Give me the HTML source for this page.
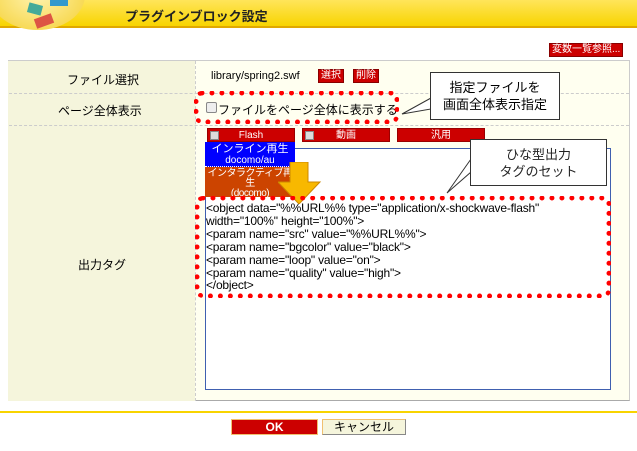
<!DOCTYPE html>
<html><head><meta charset="utf-8"><style>
*{margin:0;padding:0;box-sizing:border-box}
body{width:637px;height:451px;background:#fff;font-family:"Liberation Sans","Noto Sans CJK JP",sans-serif;font-size:12px;color:#000;position:relative;overflow:hidden}
.abs{position:absolute}
.hdr{left:0;top:0;width:637px;height:28px;background:linear-gradient(#ffe55a,#f8d400);border-bottom:2px solid #e0a800}
.logo{left:-10px;top:-40px;width:95px;height:70px;border-radius:50%;background:radial-gradient(#fff3b0,#f4cf30)}
.title{left:125px;top:6px;font-size:13px;font-weight:bold;color:#222}
.rb{background:#c00;color:#fff;font-size:10px;border:1px solid #800;line-height:12px;padding:0 2px}
.tbl{left:8px;top:60px;width:622px;height:341px;border:1px solid #ccc;border-bottom:1px solid #aaa;background:#fffff0}
.lab{left:8px;width:187px;background:#f5f5dc;text-align:center;font-size:12px}
.dash{height:0;border-top:1px dashed #ccc}
.tab{top:128px;height:14px;background:#c00;color:#fff;font-size:10px;text-align:center;line-height:14px;border:1px solid #900}
.tab i{position:absolute;left:2px;top:2px;width:9px;height:9px;background:#ddd;border:1px solid #888}
.ta{left:205px;top:148px;width:406px;height:242px;border:1px solid #4060b0;background:#fff}
.code{left:206px;top:202px;font-size:12px;line-height:12.9px;white-space:pre;letter-spacing:-0.2px}
.dot{border:5px dotted #f00;border-radius:8px}
.call{background:#fff;border:1px solid #333;text-align:center;font-size:13px;line-height:17px}
</style></head><body>
<div class="abs hdr"></div>
<div class="abs logo"></div>
<div class="abs" style="left:28px;top:4px;width:14px;height:10px;background:#4a9;transform:rotate(15deg)"></div>
<div class="abs" style="left:50px;top:0;width:18px;height:6px;background:#39c"></div>
<div class="abs" style="left:35px;top:16px;width:18px;height:10px;background:#d54;transform:rotate(-20deg)"></div>
<div class="abs title">プラグインブロック設定</div>
<div class="abs rb" style="left:549px;top:43px;">変数一覧参照...</div>
<div class="abs tbl"></div>
<div class="abs lab" style="top:61px;height:340px"></div>
<div class="abs dash" style="left:9px;top:93px;width:620px"></div>
<div class="abs dash" style="left:9px;top:125px;width:620px"></div>
<div class="abs" style="left:195px;top:61px;height:340px;border-left:1px dashed #ccc"></div>
<div class="abs" style="left:67px;top:71px">ファイル選択</div>
<div class="abs" style="left:58px;top:102px">ページ全体表示</div>
<div class="abs" style="left:78px;top:256px">出力タグ</div>
<div class="abs" style="left:211px;top:70px;font-size:11px">library/spring2.swf</div>
<div class="abs rb" style="left:318px;top:69px">選択</div>
<div class="abs rb" style="left:353px;top:69px">削除</div>
<div class="abs" style="left:206px;top:102px;width:11px;height:11px;border:1px solid #888;background:#eee;border-radius:2px"></div>
<div class="abs" style="left:218px;top:101px">ファイルをページ全体に表示する</div>
<div class="abs tab" style="left:207px;width:88px"><i></i>Flash</div>
<div class="abs tab" style="left:302px;width:88px"><i></i>動画</div>
<div class="abs tab" style="left:397px;width:88px">汎用</div>
<div class="abs ta"></div>
<div class="abs" style="left:205px;top:142px;width:90px;height:25px;background:#00f;color:#fff;text-align:center;font-size:11px;line-height:11px;padding-top:2px;border-bottom:1px dotted #fff">インライン再生<br><span style="font-size:10px">docomo/au</span></div>
<div class="abs" style="left:205px;top:167px;width:90px;height:30px;background:#c40;color:#fff;text-align:center;font-size:10px;line-height:10px;padding-top:2px;letter-spacing:-0.5px;overflow:hidden">インタラクティブ再<br>生<br>(docomo)</div>
<div class="abs code">&lt;object data="%%URL%% type="application/x-shockwave-flash"
width="100%" height="100%"&gt;
&lt;param name="src" value="%%URL%%"&gt;
&lt;param name="bgcolor" value="black"&gt;
&lt;param name="loop" value="on"&gt;
&lt;param name="quality" value="high"&gt;
&lt;/object&gt;</div>
<svg class="abs" style="left:278px;top:162px" width="44" height="42"><polygon points="12,0 30,0 30,20 42,20 21,42 0,20 12,20" fill="#f8b800" stroke="#c80" stroke-width="1"/></svg>
<div class="abs dot" style="left:194px;top:91px;width:205px;height:33px"></div>
<div class="abs dot" style="left:195px;top:196px;width:416px;height:102px"></div>
<svg class="abs" style="left:0;top:0" width="637" height="451"><polygon points="431,98 402,114 431,109" fill="#fff" stroke="#333"/><polygon points="471,159 447,193 471,172" fill="#fff" stroke="#333"/></svg>
<div class="abs call" style="left:430px;top:72px;width:130px;height:48px;padding-top:6px">指定ファイルを<br>画面全体表示指定</div>
<div class="abs call" style="left:470px;top:139px;width:137px;height:47px;padding-top:6px;color:#222">ひな型出力<br>タグのセット</div>
<div class="abs" style="left:0;top:411px;width:637px;height:2px;background:#f8d400"></div>
<div class="abs" style="left:231px;top:419px;width:87px;height:16px;background:#c00;border:1px solid #f0c070;color:#fff;font-weight:bold;text-align:center;line-height:14px;font-size:12px">OK</div>
<div class="abs" style="left:322px;top:419px;width:84px;height:16px;background:#f5f5dc;border:1px solid #f0c070;border-right-color:#888;border-bottom-color:#888;text-align:center;line-height:14px;font-size:12px">キャンセル</div>
</body></html>
